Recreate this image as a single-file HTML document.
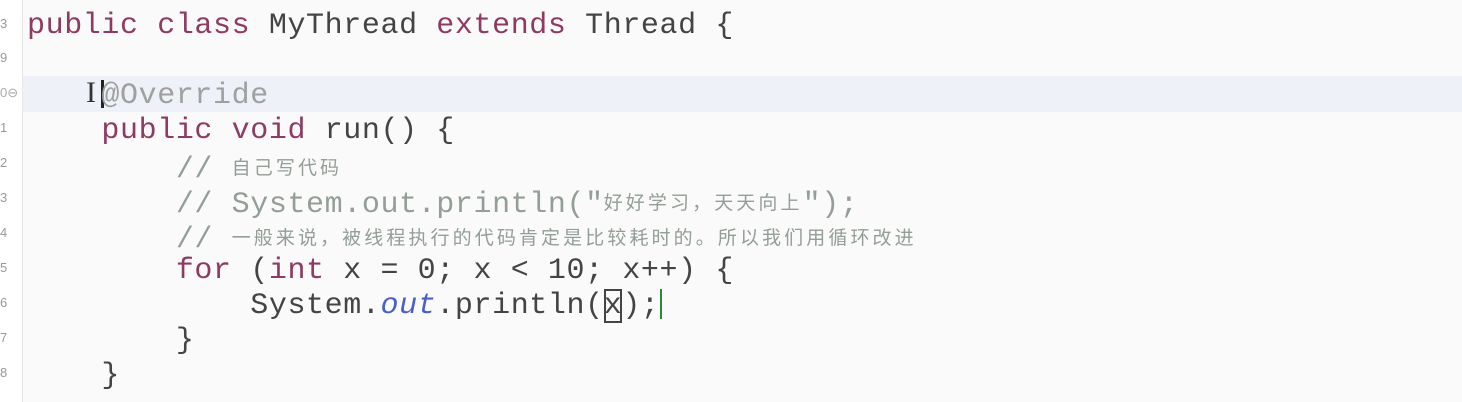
<!DOCTYPE html>
<html><head><meta charset="utf-8"><style>
body{margin:0;width:1462px;height:402px;background:#fafafa;overflow:hidden;position:relative;font-family:"Liberation Mono",monospace;}
.g{position:absolute;left:0;top:0;width:22px;height:402px;background:#fff;border-right:1px solid #e6e6e6;}
.hl{position:absolute;left:23px;top:76px;width:1439px;height:36px;background:#eef1f7;}
.code{position:absolute;left:27px;top:9px;font-size:30px;line-height:35px;color:#444;letter-spacing:0.6px;}
.l{height:35px;white-space:pre;}
.k{color:#8e3a62;}
.c{color:#939e96;}
.a{color:#a0a0a0;}
.o{color:#4a5fc8;font-style:italic;}
.z{font-family:"Noto Sans CJK SC",sans-serif;font-size:19px;letter-spacing:3.1px;vertical-align:3px;}
.n{position:absolute;left:0;font-size:13px;color:#999;font-family:"Liberation Sans",sans-serif;}
</style></head><body>
<div class="g"></div>
<div class="hl"></div>
<div class="n" style="top:16px">3</div>
<div class="n" style="top:50px">9</div>
<div class="n" style="top:85px;color:#aaa">0⊖</div>
<div class="n" style="top:120px">1</div>
<div class="n" style="top:155px">2</div>
<div class="n" style="top:190px">3</div>
<div class="n" style="top:225px">4</div>
<div class="n" style="top:260px">5</div>
<div class="n" style="top:295px">6</div>
<div class="n" style="top:330px">7</div>
<div class="n" style="top:365px">8</div>
<div style="position:absolute;left:101px;top:80px;width:3px;height:28px;background:#222"></div>
<div style="position:absolute;left:86px;top:79px;width:10px;height:28px;color:#333;font-size:30px;line-height:28px;font-family:'Liberation Serif',serif">I</div>
<div class="code"><div class="l"><span class="k">public class</span> MyThread <span class="k">extends</span> Thread {</div><div class="l"> </div><div class="l">    <span class="a">@Override</span></div><div class="l">    <span class="k">public void</span> run() {</div><div class="l">        <span class="c">// <span class="z">自己写代码</span></span></div><div class="l">        <span class="c">// System.out.println("<span class="z">好好学习，天天向上</span>");</span></div><div class="l">        <span class="c">// <span class="z">一般来说，被线程执行的代码肯定是比较耗时的。所以我们用循环改进</span></span></div><div class="l">        <span class="k">for</span> (<span class="k">int</span> x = 0; x &lt; 10; x++) {</div><div class="l">            System.<span class="o">out</span>.println(<span style="outline:2px solid #444;outline-offset:-2px">x</span>);<span style="display:inline-block;width:2px;height:30px;background:#2a8a3a;vertical-align:-6px"></span></div><div class="l">        }</div><div class="l">    }</div></div>
</body></html>
